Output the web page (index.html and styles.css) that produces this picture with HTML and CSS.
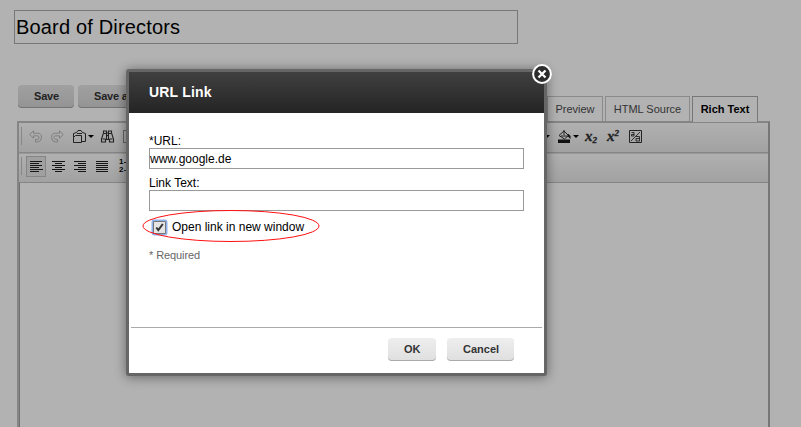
FILE: index.html
```html
<!DOCTYPE html>
<html lang="en">
<head>
<meta charset="utf-8">
<title>URL Link</title>
<link rel="stylesheet" href="styles.css">
</head>
<body>
<main class="page">
  <div class="title-field">Board of Directors</div>
  <div class="actions">
    <div class="buttons"><button class="btn dim save">Save</button><button class="btn dim">Save and</button></div>
    <nav class="tabs"><span class="tab preview">Preview</span><span class="tab source">HTML Source</span><span class="tab active">Rich Text</span></nav>
  </div>
  <section class="editor">
    <div class="toolbar">
      <i class="grip"></i>
      <div class="tools first">
        <svg class="icon" viewBox="0 0 13 13"><path class="faint" d="M4.500.8.700 4.500l3.800 3.700V5.800h4q1.500 0 1.500 1.700T8.500 9.500H6.500V12h2q4-.5 4-4.500 0-4.300-4-4.300h-4z"/></svg>
        <svg class="icon" viewBox="0 0 13 13"><path class="faint" d="m8.500.8 3.800 3.700-3.800 3.700V5.800h-4Q3 5.800 3 7.500t1.500 2h2V12h-2q-4-.5-4-4.500 0-4.300 4-4.300h4z"/></svg>
        <svg class="icon" viewBox="0 0 13 13"><path class="line" d="M2.500 5.500h6v7h-8v-5zM.5 7.500v-4l3-1 1.500-2h3l1.500 2 3 1v8h-4M4 3.500h5"/></svg>
      </div>
      <i class="caret paste"></i>
      <svg class="icon find" viewBox="0 0 13 13"><path class="line heavy" d="M2.500 1h3v2h2V1h3v2l2 6v3h-4V9.500h-4V12h-4V9l2-6zM3 3.500h2.500v6M10 3.500H7.500v6M1.500 9h3M8.500 9h3M5.500 5.500h2"/></svg>
      <svg class="icon para" viewBox="0 0 13 13"><path class="line dots" d="M.5.500h12v12H.5z"/><path class="line" d="M3.500 10V3h3v3h-3"/></svg>
      <div class="tools end">
        <i class="caret edge"></i>
        <svg class="icon bucket" viewBox="0 0 13 13"><path class="line" d="m1 5.500 5-4.500 4.500 4.500-4 3.500zM6 0v5M3 6h6"/><path d="M9 4h1.500l2 2v3L10 6.500zM0 9.500h12V13H0z"/></svg>
        <i class="caret fill"></i>
        <span class="script">x<sub>2</sub></span>
        <span class="script">x<sup>2</sup></span>
        <svg class="icon char" viewBox="0 0 13 13"><path class="line" d="M.5.500h12v12H.5z"/><path class="line thin" d="m2 11 9-9M2.500 2.500H5v3.500H2.500V4.500H5M7 6.500h3.500V11H7V8.500h3.500"/></svg>
      </div>
    </div>
    <div class="toolbar second">
      <i class="grip"></i>
      <div class="tools aligns">
        <span class="selected"><svg class="icon" viewBox="0 0 13 13"><path class="rows" d="M0 1.500h12M0 3.500h9M0 5.500h12M0 7.500h9M0 9.500h13M0 11.500h9"/></svg></span>
        <svg class="icon" viewBox="0 0 13 13"><path class="rows" d="M0 1.500h13M3 3.500h7M0 5.500h13M3 7.500h7M0 9.500h13M3 11.500h7"/></svg>
        <svg class="icon" viewBox="0 0 13 13"><path class="rows" d="M0 1.500h12M4 3.500h8M0 5.500h12M4 7.500h8M0 9.500h12M4 11.500h8"/></svg>
        <svg class="icon" viewBox="0 0 13 13"><path class="rows" d="M0 1.500h12M0 3.500h12M0 5.500h12M0 7.500h12M0 9.500h12M0 11.500h12"/></svg>
        <div class="numbers"><span>1</span><span>2</span></div>
      </div>
    </div>
  </section>
</main>

<div class="dialog" role="dialog">
  <header class="head">URL Link</header>
  <button class="close" aria-label="Close"><svg viewBox="0 0 20 20"><circle cx="10" cy="10" r="8.900"/><path d="m6.500 6.500 7 7m0-7-7 7"/></svg></button>
  <div class="form">
    <div class="label">*URL:</div>
    <div class="input">www.google.de</div>
    <div class="label link">Link Text:</div>
    <div class="input"></div>
    <div class="check"><span class="box"><svg viewBox="0 0 11 11"><path d="m2.300 5.500 2 2.500 4.500-6"/></svg></span>Open link in new window</div>
    <div class="required">* Required</div>
  </div>
  <footer class="foot"><button class="btn ok">OK</button><button class="btn cancel">Cancel</button></footer>
  <svg class="ring" viewBox="0 0 178 32"><ellipse cx="89" cy="16" rx="88" ry="15.500"/></svg>
</div>
</body>
</html>
```
FILE: styles.css
```css
* { box-sizing: border-box; }
body {
  margin: 0;
  height: 427px;
  overflow: hidden;
  background: #b2b2b2;
  font-family: "Liberation Sans", Arial, sans-serif;
  font-size: 12px;
  color: #000;
}
.page { height: 427px; padding: 10px 31px 0 14px; display: flex; flex-direction: column; }
.title-field {
  width: 504px;
  height: 34px;
  flex: none;
  border: 1px solid #777;
  padding-left: 1px;
  font-size: 20px;
  line-height: 33px;
  letter-spacing: .17px;
}
.actions { display: flex; justify-content: space-between; height: 77px; flex: none; padding-left: 4px; }
.buttons { display: flex; gap: 4px; padding-top: 41px; }
.btn {
  height: 23px;
  padding: 0 16px;
  border: 0;
  border-radius: 4px;
  background: linear-gradient(#eee, #dfdfdf);
  box-shadow: inset 0 -1px #aaa;
  font: bold 11px/21px "Liberation Sans", Arial, sans-serif;
  color: #333;
  white-space: nowrap;
}
.dim { background: linear-gradient(#a0a0a0, #949494); box-shadow: inset 0 -1px #737373; color: #222; letter-spacing: -.2px; }
.save { width: 56px; }
.tabs { display: flex; align-items: flex-end; padding-right: 12px; }
.tab {
  height: 25px;
  border: 1px solid #8b8b8b;
  border-bottom: 0;
  font-size: 11px;
  line-height: 24px;
  text-align: center;
  color: #333;
}
.preview { width: 56px; margin-right: 2px; }
.source { width: 85px; margin-right: 2px; }
.active {
  width: 66px;
  height: 26px;
  margin-bottom: -1px;
  background: #b2b2b2;
  border-color: #777;
  font-weight: bold;
  color: #000;
  z-index: 1;
}
.editor { flex: 1; margin-left: 3px; border: 2px solid #777; border-color: #858585 #777 #777 #858585; border-bottom: 0; box-shadow: inset 1px 1px #707070; }
.toolbar {
  height: 30px;
  display: flex;
  align-items: center;
  background: linear-gradient(#b0b0b0, #a2a2a2);
  border-bottom: 1px solid #858585;
  padding-bottom: 3px;
}
.second { border-top: 1px solid #999; padding-bottom: 4px; }
.grip { width: 1px; height: 18px; margin-left: 2px; background: #888; }
.tools { display: flex; align-items: center; }
.first { gap: 9px; margin-left: 7px; }
.icon { width: 13px; height: 13px; display: block; flex: none; overflow: visible; fill: #111; }
.line { fill: none; stroke: #222; stroke-width: 1; }
.heavy { stroke-width: 1.1; }
.thin { stroke-width: .9; }
.faint { fill: none; stroke: #808080; stroke-width: 1; }
.dots { stroke-dasharray: 1 1; }
.rows { stroke: #151515; stroke-width: 1; shape-rendering: crispEdges; }
.caret { border: 3px solid transparent; border-top-color: #000; border-bottom: 0; }
.paste { margin-left: 2px; }
.find { margin-left: 7px; }
.para { margin-left: 9px; }
.end { margin: 0 126px 0 auto; }
.bucket { margin-left: 8px; }
.fill { margin: 0 6px 0 2px; }
.script { width: 22px; font: italic bold 15px/14px "Liberation Serif", serif; color: #222; -webkit-text-stroke: .3px #222; }
.script sub, .script sup { font-size: 9px; line-height: 0; }
.script sub { vertical-align: -2px; }
.script sup { vertical-align: 5px; }
.aligns { gap: 9px; margin-left: 4px; }
.selected { width: 20px; height: 21px; padding: 3px; border: 1px solid #858585; background: #a0a0a0; margin-right: -3px; }
.numbers { font: bold 8px/8px "Liberation Sans", sans-serif; margin-left: 1px; }
.numbers span { display: flex; align-items: center; gap: 1px; }
.numbers span::after { content: ""; width: 7px; height: 1px; background: #222; }

.dialog {
  position: absolute;
  left: 126px;
  top: 69px;
  width: 421px;
  height: 307px;
  display: flex;
  flex-direction: column;
  border: 3px solid #666;
  border-radius: 3px;
  background: #fff;
  box-shadow: 0 1px 12px rgba(0, 0, 0, .45);
}
.head {
  height: 41px;
  padding-left: 20px;
  background: linear-gradient(#404040, #242424);
  color: #fff;
  font-size: 14px;
  font-weight: bold;
  line-height: 40px;
  letter-spacing: .2px;
}
.close { position: absolute; top: -8px; right: -8px; width: 20px; height: 20px; padding: 0; border: 0; background: none; }
.close svg { display: block; width: 20px; height: 20px; fill: #2c2c2c; stroke: #fff; stroke-width: 2; }
.close path { stroke-width: 2.3; }
.form { flex: 1; padding: 21px 20px 0; }
.label { height: 14px; line-height: 14px; }
.link { margin-top: 7px; }
.input { height: 21px; border: 1px solid #999; line-height: 20px; }
.check { height: 14px; margin: 9px 0 0 4px; display: flex; align-items: center; }
.box { width: 13px; height: 13px; margin-right: 6px; border: 1px solid #777; background: #e5e5e5; box-shadow: 0 0 0 1.5px #8eb2ec; border-radius: 1px; }
.box svg { display: block; fill: none; stroke: #333; stroke-width: 2; }
.required { margin-top: 14px; font-size: 11px; line-height: 14px; color: #666; letter-spacing: -.1px; }
.foot {
  height: 46px;
  margin: 0 2px;
  padding: 10px 28px 0 0;
  display: flex;
  justify-content: flex-end;
  gap: 11px;
  border-top: 1px solid #aaa;
}
.ok { width: 48px; }
.cancel { width: 67px; }
.ring { position: absolute; left: 13px; top: 138px; width: 178px; height: 32px; fill: none; stroke: #ff1010; stroke-width: 1; }
```
